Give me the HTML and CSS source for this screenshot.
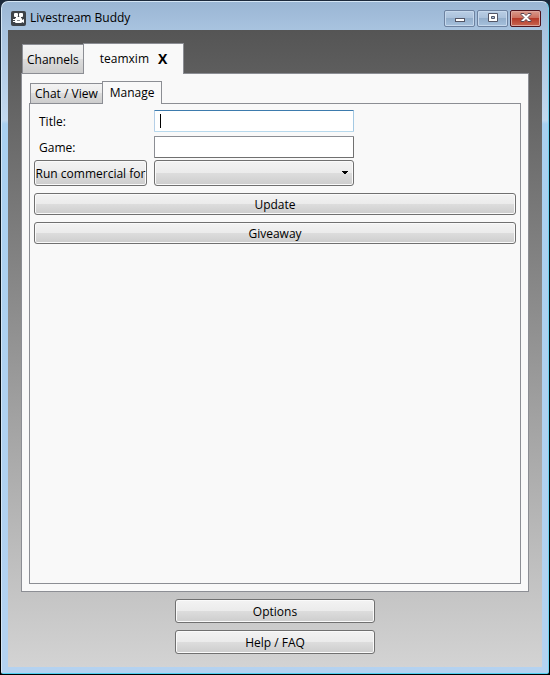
FILE: index.html
```html
<!DOCTYPE html>
<html lang="en">
<head>
  <meta charset="UTF-8" />
  <meta name="viewport" content="width=device-width, initial-scale=1.0" />
  <title>Livestream Buddy</title>
  <link rel="stylesheet" href="styles.css">
</head>
<body>
  <div class="window">
    <header class="titlebar">
      <svg class="app-icon" width="15" height="15" viewBox="0 0 15 15" aria-hidden="true">
        <rect width="15" height="15" rx="2" fill="#3d4248" />
        <rect x="3" y="2" width="4" height="4" rx="1" fill="#fff" />
        <rect x="8" y="2" width="4" height="4" rx="1" fill="#fff" />
        <rect x="4" y="7" width="7" height="5" rx="1" fill="#fff" />
        <path d="M5 6h5v1H5zM2 8h2v1H2zM2 10h2v1H2zM11 9l2-1v4l-2-1z" fill="#fff" />
        <path d="M6 9.500h3" stroke="#8a8e92" />
      </svg>
      <h1 class="title">Livestream Buddy</h1>
      <div class="window-buttons">
        <button type="button" class="window-btn" aria-label="Minimize">
          <svg width="12" height="10" viewBox="0 0 12 10"><rect x="1.5" y="5.5" width="9" height="3" fill="#fff" stroke="#535666" /></svg>
        </button>
        <button type="button" class="window-btn" aria-label="Maximize">
          <svg width="12" height="10" viewBox="0 0 12 10"><path fill-rule="evenodd" d="M1.500.500h9v8h-9zM4.500 3.500v2h3v-2z" fill="#fff" stroke="#535666" /></svg>
        </button>
        <button type="button" class="window-btn window-close" aria-label="Close">
          <svg width="12" height="10" viewBox="0 0 12 10"><path d="M1 .5h3l2 2 2-2h3v1L8 4.500l3 3v1H8l-2-2-2 2H1v-1l3-3-3-3z" fill="#fff" stroke="#5a4450" /></svg>
        </button>
      </div>
    </header>

    <main class="client">
      <nav class="tabs">
        <button type="button" class="tab">Channels</button>
        <div class="tab tab-active">
          <span>teamxim</span>
          <button type="button" class="tab-close" aria-label="Close teamxim">X</button>
        </div>
      </nav>

      <section class="panel">
        <nav class="tabs tabs-inner">
          <button type="button" class="tab">Chat / View</button>
          <button type="button" class="tab tab-active">Manage</button>
        </nav>

        <form class="manage">
          <div class="fields">
            <label for="titleInput">Title:</label>
            <input type="text" id="titleInput" autocomplete="off" autofocus />
            <label for="gameInput">Game:</label>
            <input type="text" id="gameInput" autocomplete="off" />
            <button type="button" class="btn btn-commercial">Run commercial for</button>
            <select class="btn" id="commercialLength" aria-label="Commercial length">
              <option value=""></option>
            </select>
          </div>
          <button type="button" class="btn btn-row">Update</button>
          <button type="button" class="btn btn-row">Giveaway</button>
        </form>
      </section>

      <footer class="footer">
        <button type="button" class="btn">Options</button>
        <button type="button" class="btn">Help / FAQ</button>
      </footer>
    </main>
  </div>
</body>
</html>
```

FILE: styles.css
```css
:root {
  --border: #8c8e94;
  --button-border: #707070;
  --panel: #f9f9f9;
  --button: linear-gradient(#f3f3f3, #ebebeb 50%, #dddddd 50%, #cdcdcd);
}
* {
  box-sizing: border-box;
  margin: 0;
  padding: 0;
}
body {
  font-family: "Open Sans", "Noto Sans", sans-serif;
  font-size: 12px;
  line-height: 16px;
  color: #000;
  background: linear-gradient(#1c2a3c, #0a1a26 20%, #000);
  display: flex;
  min-height: 100vh;
  padding: 1px;
}
button, input, select {
  font: inherit;
  color: inherit;
}
.window {
  flex: 1;
  display: flex;
  flex-direction: column;
  padding: 0 6px 6px;
  border: 1px solid #d5e6f5;
  border-bottom-color: #4fd0f0;
  border-right-color: #6fd3ee;
  border-radius: 7px 7px 2px 2px;
  background: linear-gradient(#9ab6d4, #a9c4e0 30px, #c3d9ef 118px, #a9d0f0 122px, #b4d2f0);
}
.titlebar {
  display: flex;
  align-items: center;
  height: 28px;
  padding: 4px 0 0 3px;
}
.title {
  flex: 1;
  margin-left: 4px;
  font-size: 12px;
  font-weight: normal;
}
.window-buttons {
  display: flex;
  gap: 2px;
  padding-right: 1px;
}
.window-btn {
  display: flex;
  align-items: center;
  justify-content: center;
  width: 31px;
  height: 17px;
  border: 1px solid #6d82a0;
  border-radius: 2px;
  box-shadow: inset 0 0 0 1px #c6d8ec;
  background: linear-gradient(#b9cee5, #a9c0da 50%, #94afcc 50%, #a6c1dd);
}
.window-close {
  border-color: #50131c;
  box-shadow: inset 0 0 0 1px #dda59c;
  background: linear-gradient(#d99a8c, #ca6b5a 50%, #b53a29 50%, #c86550);
}
.client {
  flex: 1;
  display: flex;
  flex-direction: column;
  padding: 13px;
  background: linear-gradient(#555555, #d3d3d3);
}

/* Tabs */
.tabs {
  display: flex;
  align-items: flex-end;
  padding-left: 1px;
  margin-bottom: -1px;
}
.tab {
  height: 30px;
  padding: 1px 4px 0;
  border: 1px solid var(--border);
  background: var(--button);
}
.tab-active {
  position: relative;
  display: flex;
  align-items: center;
  gap: 9px;
  height: 31px;
  margin-left: -1px;
  padding: 0 16px;
  border-bottom: 0;
  background: var(--panel);
}
.tab-close {
  border: 0;
  background: none;
  font-size: 14px;
  font-weight: bold;
}
.tabs-inner .tab {
  height: 21px;
}
.tabs-inner .tab-active {
  height: 23px;
  padding: 0 7px;
}

.panel {
  flex: 1;
  display: flex;
  flex-direction: column;
  padding: 7px;
  border: 1px solid var(--border);
  background: var(--panel);
}
.manage {
  flex: 1;
  padding: 6px 4px;
  border: 1px solid var(--border);
}
.fields {
  display: grid;
  grid-template-columns: 113px minmax(0, 200px);
  grid-template-rows: 26px 24px 26px;
  column-gap: 7px;
}
.fields label {
  padding: 4px 5px;
}
.fields input {
  width: 100%;
  height: 22px;
  padding: 0 6px;
  border: 1px solid;
  border-color: #8c8e94 #707070 #707070 #8c8e94;
  border-radius: 1px;
  background-color: #fff;
}
/* Own text cursor, does not blink */
.fields input:focus {
  outline: none;
  border-color: #3d7bad #a4c9e3 #b7d9ed #b5cfe7;
  caret-color: transparent;
  background: linear-gradient(#000, #000) 5px 3px / 1px 14px no-repeat #fff;
}

/* Buttons */
.btn {
  padding-top: 1px;
  border: 1px solid var(--button-border);
  border-radius: 3px;
  box-shadow: inset 0 0 0 1px #fafafa;
  background: var(--button);
}
select.btn {
  appearance: none;
  width: 100%;
  padding: 0 20px 0 6px;
  background:
    linear-gradient(to bottom right, #000 50%, transparent 50%) right 4px center / 4px 4px no-repeat,
    linear-gradient(to bottom left, #000 50%, transparent 50%) right 8px center / 4px 4px no-repeat,
    var(--button);
}
.btn-commercial {
  white-space: nowrap;
}
.btn-row {
  display: block;
  width: 100%;
  height: 22px;
  margin-top: 7px;
}
.footer {
  display: flex;
  flex-direction: column;
  align-items: center;
  gap: 7px;
  padding-top: 7px;
}
.footer .btn {
  width: 200px;
  height: 24px;
}
```
